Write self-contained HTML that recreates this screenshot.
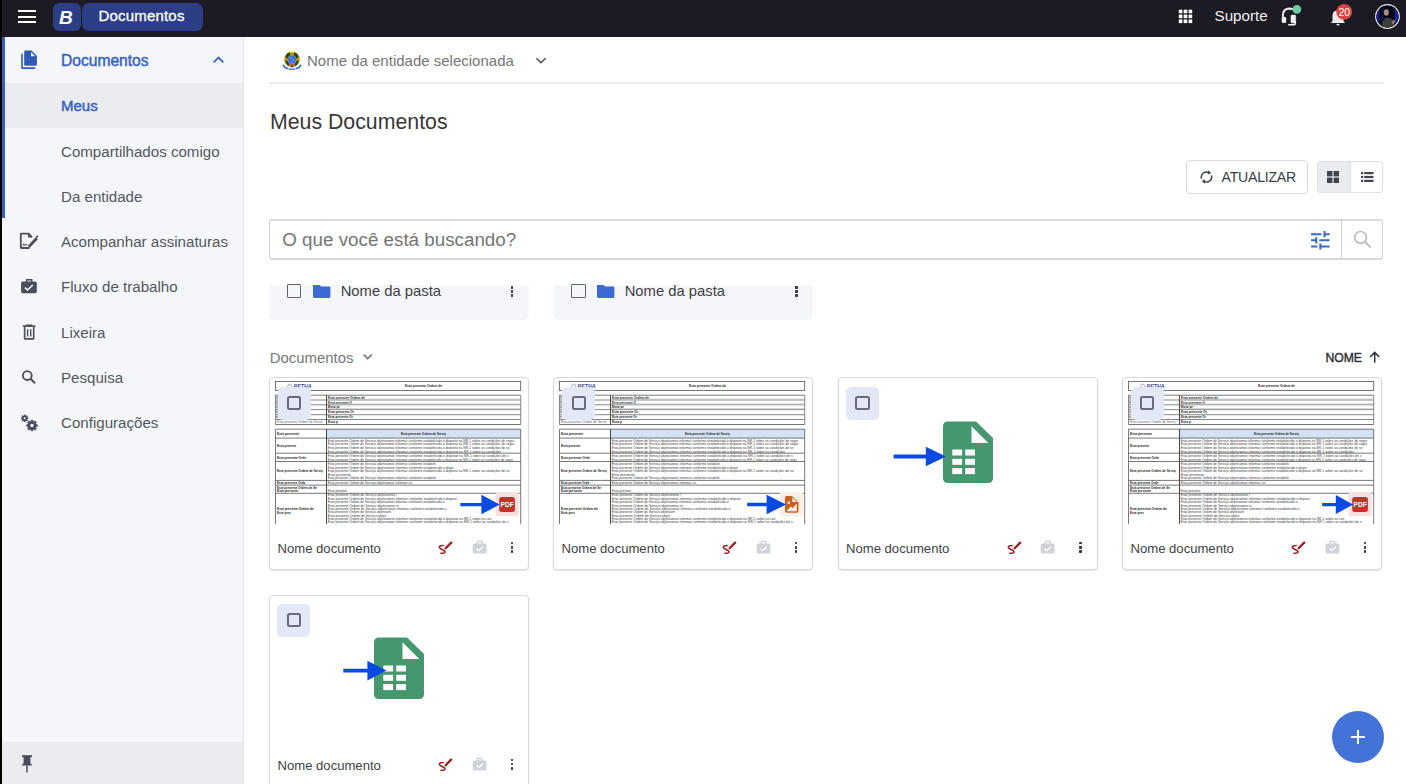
<!DOCTYPE html>
<html><head><meta charset="utf-8">
<style>
*{box-sizing:border-box;margin:0;padding:0}
html,body{width:1406px;height:784px;overflow:hidden;background:#fff;font-family:"Liberation Sans",sans-serif;}
.abs{position:absolute}
#top{position:absolute;left:0;top:0;width:1406px;height:37px;background:#1c1b24}
#side{position:absolute;left:0;top:37px;width:244px;height:747px;background:#f5f6fa;border-right:1px solid #e2e4e9}
#blackstrip{position:absolute;left:0;top:0;width:2px;height:784px;background:#000}
.nav{position:absolute;left:2px;width:241px;height:45px}
.nav .lbl{position:absolute;left:59px;top:0;line-height:45px;font-size:15px;color:#4d5059;white-space:nowrap}
.nav .ic{position:absolute;left:18px;top:13px;width:20px;height:20px}
.txt{position:absolute;white-space:nowrap;line-height:1}
.card{position:absolute;width:260px;border:1px solid #d6d9df;border-radius:4px;background:#fff;box-shadow:0 1px 1.5px rgba(0,0,0,0.1)}
.fcard{position:absolute;width:260px;background:#f5f6fa;border-radius:0 0 6px 6px}
.chk{position:absolute;width:14.2px;height:14.2px;border:2px solid #676c78;border-radius:2.5px}
.chkbg{position:absolute;width:33px;height:33px;background:#e3e8f6;border-radius:5px}
.kebab{position:absolute;width:3px}
.kebab i{display:block;width:3px;height:3px;border-radius:50%;background:#3c3f46;margin-bottom:1px}
.dot{position:absolute;left:0.3px;width:2.4px;height:2.5px;border-radius:0.7px;background:#33363d;display:block}
</style></head><body>
<div id="top">
  <!-- hamburger -->
  <div class="abs" style="left:18px;top:10px;width:18px;height:2px;background:#fff"></div>
  <div class="abs" style="left:18px;top:15.5px;width:18px;height:2px;background:#fff"></div>
  <div class="abs" style="left:18px;top:21px;width:18px;height:2px;background:#fff"></div>
  <div class="abs" style="left:53px;top:2.5px;width:28px;height:28.5px;background:#2c3e86;border-radius:6px"></div>
  <div class="txt" style="left:59px;top:8px;font-size:19px;font-weight:700;font-style:italic;color:#fff">B</div>
  <div class="abs" style="left:82px;top:2.5px;width:121px;height:28.5px;background:#2c3e86;border-radius:7px"></div>
  <div class="txt" style="left:98.4px;top:8.1px;font-size:15px;letter-spacing:0.2px;-webkit-text-stroke:0.3px #fff;color:#fff">Documentos</div>
</div>
<div id="side">
  <div class="abs" style="left:2px;top:0;width:3px;height:181px;background:#3b5fc0"></div>
  <div class="abs" style="left:5px;top:46px;width:238px;height:45px;background:#ebecef"></div>
  
  <div class="txt" style="left:61px;top:16px;font-size:15.6px;-webkit-text-stroke:0.45px #3762be;color:#3762be">Documentos</div>
  <svg class="abs" style="left:212px;top:18px" width="13" height="9" viewBox="0 0 13 9"><path d="M2.2 6.8 L6.5 2.6 L10.8 6.8" fill="none" stroke="#3762be" stroke-width="1.8" stroke-linecap="round"/></svg>
  <div class="txt" style="left:61px;top:61px;font-size:15px;-webkit-text-stroke:0.45px #3762be;color:#3762be">Meus</div>
  <div class="txt" style="left:61px;top:106.5px;font-size:15.1px;color:#53565e">Compartilhados comigo</div>
  <div class="txt" style="left:61px;top:151.5px;font-size:15.1px;color:#53565e">Da entidade</div>
  <div class="txt" style="left:61px;top:197.0px;font-size:15.1px;color:#53565e">Acompanhar assinaturas</div>
  <div class="txt" style="left:61px;top:242.0px;font-size:15.1px;color:#53565e">Fluxo de trabalho</div>
  <div class="txt" style="left:61px;top:287.5px;font-size:15.1px;color:#53565e">Lixeira</div>
  <div class="txt" style="left:61px;top:332.5px;font-size:15.1px;color:#53565e">Pesquisa</div>
  <div class="txt" style="left:61px;top:377.5px;font-size:15.1px;color:#53565e">Configurações</div>
  <div class="abs" style="left:2px;top:705px;width:241px;height:42px;background:#ebecef"></div>
</div>
<div id="blackstrip"></div>
<div id="sideicons">
  <svg class="abs" style="left:16px;top:46px" width="26" height="28" viewBox="0 0 26 28">
    <path d="M6 7.7 V21.4 Q6 22.1 6.7 22.1 H19.1" fill="none" stroke="#3059b8" stroke-width="1.6"/>
    <path d="M9.4 4.6 H15.5 L20.9 10 V18.6 Q20.9 19.8 19.7 19.8 H9.4 Q8.2 19.8 8.2 18.6 V5.8 Q8.2 4.6 9.4 4.6 Z" fill="#3059b8"/>
    <path d="M15 5.9 V10.2 H19.1 Z" fill="#f5f6fa"/>
  </svg>
  <svg class="abs" style="left:18px;top:231px" width="22" height="20" viewBox="0 0 22 20">
    <path d="M11.5 17 H3.4 Q2.8 17 2.8 16.3 V3.3 Q2.8 2.7 3.4 2.7 H10.6 L14 6.1" fill="none" stroke="#4a4e5a" stroke-width="1.8"/>
    <path d="M10 2.7 V6.6 H14 Z" fill="#4a4e5a"/>
    <path d="M10.8 15.8 L18.8 7.2" stroke="#4a4e5a" stroke-width="2.8"/>
    <path d="M17.6 6 L19.2 4.3 L20.4 5.6 L18.8 7.3 Z" fill="#4a4e5a"/>
    <path d="M4.6 15.2 L5.8 12.6 L6.8 14.6 L8 13 L9 14.8" fill="none" stroke="#4a4e5a" stroke-width="0.9"/>
  </svg>
  <svg class="abs" style="left:19px;top:277px" width="20" height="18" viewBox="0 0 20 18">
    <path d="M7.7 4.8 V2.8 H12.6 V4.8" fill="none" stroke="#4a4e5a" stroke-width="1.6"/>
    <rect x="2.1" y="4.6" width="15.7" height="11.6" rx="1.6" fill="#4a4e5a"/>
    <path d="M6 10.6 L8.6 13 L13.8 8" fill="none" stroke="#fff" stroke-width="1.5"/>
  </svg>
  <svg class="abs" style="left:20px;top:323px" width="18" height="18" viewBox="0 0 18 18">
    <path d="M2.9 3.1 H15.4" stroke="#4a4e5a" stroke-width="1.7"/>
    <path d="M6.6 2.6 V2.2 H11.6 V2.6" fill="none" stroke="#4a4e5a" stroke-width="1.4"/>
    <path d="M4.6 4 V15.2 Q4.6 15.9 5.3 15.9 H13 Q13.7 15.9 13.7 15.2 V4" fill="none" stroke="#4a4e5a" stroke-width="1.6"/>
    <path d="M7.6 6.2 V13.6 M10.7 6.2 V13.6" stroke="#4a4e5a" stroke-width="1.4"/>
  </svg>
  <svg class="abs" style="left:20px;top:368px" width="18" height="18" viewBox="0 0 18 18">
    <circle cx="7.3" cy="7.6" r="4.4" fill="none" stroke="#4a4e5a" stroke-width="1.8"/>
    <path d="M10.5 10.8 L15 15.3" stroke="#4a4e5a" stroke-width="2"/>
  </svg>
  <svg class="abs" style="left:19px;top:413px" width="20" height="20" viewBox="0 0 20 20">
    <g fill="#4a4e5a">
      <circle cx="5.7" cy="5.3" r="2.6"/>
      <g transform="translate(5.7,5.3)">
        <rect x="-0.8" y="-3.7" width="1.6" height="7.4"/><rect x="-3.7" y="-0.8" width="7.4" height="1.6"/>
        <rect x="-0.8" y="-3.7" width="1.6" height="7.4" transform="rotate(45)"/><rect x="-3.7" y="-0.8" width="7.4" height="1.6" transform="rotate(45)"/>
      </g>
      <circle cx="13" cy="12.5" r="4.2"/>
      <g transform="translate(13,12.5)">
        <rect x="-1.3" y="-5.6" width="2.6" height="11.2"/><rect x="-5.6" y="-1.3" width="11.2" height="2.6"/>
        <rect x="-1.3" y="-5.6" width="2.6" height="11.2" transform="rotate(45)"/><rect x="-5.6" y="-1.3" width="11.2" height="2.6" transform="rotate(45)"/>
      </g>
    </g>
    <circle cx="5.7" cy="5.3" r="1" fill="#f5f6fa"/>
    <circle cx="13" cy="12.5" r="1.7" fill="#f5f6fa"/>
  </svg>
  <svg class="abs" style="left:18px;top:754px" width="18" height="20" viewBox="0 0 18 20">
    <path d="M4 2.2 H14" stroke="#4a4e5a" stroke-width="2"/>
    <path d="M5.6 3 H12.4 V9 L14.4 11.6 H3.6 L5.6 9 Z" fill="#4a4e5a"/>
    <path d="M9 11.5 V18.6" stroke="#4a4e5a" stroke-width="1.5"/>
  </svg>
</div>


<!-- top bar right -->
<svg class="abs" style="left:1178px;top:9px" width="16" height="16" viewBox="0 0 16 16">
  <g fill="#fff">
    <rect x="0.8" y="0.7" width="3.6" height="3.6"/><rect x="5.7" y="0.7" width="3.6" height="3.6"/><rect x="10.6" y="0.7" width="3.6" height="3.6"/>
    <rect x="0.8" y="5.6" width="3.6" height="3.6"/><rect x="5.7" y="5.6" width="3.6" height="3.6"/><rect x="10.6" y="5.6" width="3.6" height="3.6"/>
    <rect x="0.8" y="10.5" width="3.6" height="3.6"/><rect x="5.7" y="10.5" width="3.6" height="3.6"/><rect x="10.6" y="10.5" width="3.6" height="3.6"/>
  </g>
</svg>
<div class="txt" style="left:1214.5px;top:8px;font-size:15.2px;color:#f0f0f0">Suporte</div>
<svg class="abs" style="left:1278px;top:3px" width="26" height="26" viewBox="0 0 26 26">
  <path d="M4.9 14.6 V12.5 Q4.9 5.8 11 5.5 Q13.5 5.5 15 6.3" fill="none" stroke="#f2f2f2" stroke-width="1.9"/>
  <rect x="3.7" y="14.1" width="4.5" height="5.8" rx="1.3" fill="#eeeeee"/>
  <rect x="13" y="12.1" width="4.6" height="7.9" rx="1" fill="#eeeeee" stroke="#f2f2f2" stroke-width="0.6"/>
  <path d="M10.2 21.7 H16.2 Q17.3 21.7 17.3 20.5 V18" fill="none" stroke="#f2f2f2" stroke-width="1.5"/>
  <circle cx="18.9" cy="6.4" r="4.3" fill="#6dcba4"/>
</svg>
<svg class="abs" style="left:1326px;top:2px" width="30" height="26" viewBox="0 0 30 26">
  <path d="M4.9 21 H19.1 L17.5 19 V14 Q17.5 8.6 12 8.3 Q6.5 8.6 6.5 14 V19 Z" fill="#ebebeb"/>
  <ellipse cx="12" cy="22.6" rx="1.6" ry="0.9" fill="#ebebeb"/>
  <circle cx="18.2" cy="9.9" r="7.9" fill="#da443d"/>
  <text x="18.3" y="13.8" font-family="Liberation Sans" font-size="10.6" fill="#fff" text-anchor="middle">20</text>
</svg>
<svg class="abs" style="left:1373px;top:2px" width="29" height="29" viewBox="0 0 29 29">
  <defs><clipPath id="av"><circle cx="14.5" cy="14.5" r="11"/></clipPath></defs>
  <circle cx="14.5" cy="14.5" r="12.4" fill="#e8e8ea"/>
  <circle cx="14.5" cy="14.5" r="11" fill="#05051a"/>
  <g clip-path="url(#av)">
    <rect x="2" y="2" width="25" height="25" fill="#05051a"/>
    <rect x="3" y="2" width="3.5" height="25" fill="#1a1f8c"/>
    <rect x="22" y="2" width="4" height="25" fill="#1c24a0"/>
    <rect x="9" y="2" width="1.5" height="25" fill="#10134e"/>
    <path d="M8.5 27 Q8.5 16.5 14 15.5 Q19.5 16 20.5 19 L22 27 Z" fill="#3a3d38"/>
    <ellipse cx="13.3" cy="10.4" rx="2.5" ry="3.2" fill="#a88e7e"/>
    <path d="M18.5 20.5 L21 17.5 L22.3 19 L20.5 23 Z" fill="#9c7a68"/>
  </g>
</svg>

<!-- entity header -->
<svg class="abs" style="left:282px;top:50px" width="20" height="22" viewBox="0 0 20 22">
  <circle cx="10" cy="9.6" r="7.7" fill="#c99a1c"/>
  <circle cx="10" cy="9.6" r="7.7" fill="none" stroke="#e8b52a" stroke-width="1" stroke-dasharray="1.5 1.2"/>
  <path d="M3.4 7 Q4 3.4 7.6 2.6 L8.6 5 Q5.8 6 5.6 9 Z M16.6 7 Q16 3.4 12.4 2.6 L11.4 5 Q14.2 6 14.4 9 Z M3.2 10.5 Q3.6 14.5 7 16 L7.6 13.6 Q5.4 12.6 5.4 10.5 Z M16.8 10.5 Q16.4 14.5 13 16 L12.4 13.6 Q14.6 12.6 14.6 10.5 Z" fill="#1f4a1a"/>
  <circle cx="10" cy="9.4" r="3.9" fill="#3f6fe8"/>
  <circle cx="9" cy="8.6" r="0.6" fill="#9fbef8"/><circle cx="11" cy="10.2" r="0.6" fill="#9fbef8"/>
  <path d="M1 14.8 L3 17.6 L6 18.6 M19 14.8 L17 17.6 L14 18.6" fill="none" stroke="#3c6ee0" stroke-width="1.8"/>
  <path d="M6.5 18.8 Q10 19.8 13.5 18.8" fill="none" stroke="#4a7ae6" stroke-width="1.4"/>
  <rect x="8.6" y="14.4" width="2.8" height="2.6" fill="#7a3b6a"/>
</svg>
<div class="txt" style="left:307px;top:52.9px;font-size:15px;color:#767676">Nome da entidade selecionada</div>
<svg class="abs" style="left:534px;top:55px" width="14" height="10" viewBox="0 0 14 10"><path d="M2.3 3.2 L7 7.6 L11.7 3.2" fill="none" stroke="#555" stroke-width="1.5"/></svg>
<div class="abs" style="left:269px;top:82px;width:1114.5px;height:2px;background:#ebedf0"></div>

<div class="txt" style="left:270px;top:112.3px;font-size:21.3px;color:#383838">Meus Documentos</div>

<!-- toolbar -->
<div class="abs" style="left:1186.3px;top:160.2px;width:121.4px;height:34px;border:1px solid #d6d9de;border-radius:4px;background:#fff"></div>
<svg class="abs" style="left:1198px;top:168px" width="17" height="18" viewBox="0 0 17 18">
  <path d="M3.4 10.6 Q2.8 6.3 6 4.6 Q8.6 3.4 11 4.6" fill="none" stroke="#464a52" stroke-width="1.6"/>
  <path d="M10.2 2.2 L13.4 4.9 L9.8 6.8 Z" fill="#464a52"/>
  <path d="M13.6 7.4 Q14.2 11.7 11 13.4 Q8.4 14.6 6 13.4" fill="none" stroke="#464a52" stroke-width="1.6"/>
  <path d="M6.8 15.8 L3.6 13.1 L7.2 11.2 Z" fill="#464a52"/>
</svg>
<div class="txt" style="left:1221.5px;top:170.3px;font-size:14.1px;letter-spacing:-0.22px;color:#3a3d44">ATUALIZAR</div>
<div class="abs" style="left:1317px;top:161.3px;width:66.4px;height:32.2px;border:1px solid #dcdfe4;border-radius:3px;background:#fff;overflow:hidden">
  <div class="abs" style="left:0;top:0;width:33px;height:31px;background:#ebecef;border-right:1px solid #dcdfe4"></div>
</div>
<svg class="abs" style="left:1326px;top:170px" width="14" height="14" viewBox="0 0 14 14">
  <rect x="1" y="1" width="5.4" height="5.4" fill="#41454e"/><rect x="7.6" y="1" width="5.4" height="5.4" fill="#41454e"/>
  <rect x="1" y="7.6" width="5.4" height="5.4" fill="#41454e"/><rect x="7.6" y="7.6" width="5.4" height="5.4" fill="#41454e"/>
</svg>
<svg class="abs" style="left:1360px;top:170px" width="15" height="14" viewBox="0 0 15 14">
  <rect x="1" y="2" width="2.2" height="2.2" fill="#41454e"/><rect x="4.2" y="2" width="9.3" height="2.2" fill="#41454e"/>
  <rect x="1" y="5.9" width="2.2" height="2.2" fill="#41454e"/><rect x="4.2" y="5.9" width="9.3" height="2.2" fill="#41454e"/>
  <rect x="1" y="9.8" width="2.2" height="2.2" fill="#41454e"/><rect x="4.2" y="9.8" width="9.3" height="2.2" fill="#41454e"/>
</svg>

<!-- search -->
<div class="abs" style="left:269.3px;top:219.4px;width:1114.2px;height:41px;border:1px solid #d4d4d4;border-top:2px solid #dadada;border-bottom:2px solid #d8d8d8;border-radius:3px;background:#fff"></div>
<div class="abs" style="left:1341px;top:221px;width:1.4px;height:38px;background:#d2d2d2"></div>
<div class="txt" style="left:282.3px;top:230.8px;font-size:18.8px;color:#757575">O que você está buscando?</div>
<svg class="abs" style="left:1308.4px;top:227.7px" width="24.7" height="24.7" viewBox="0 0 24 24"><path fill="#3b6cc4" d="M3 17v2h6v-2H3zM3 5v2h10V5H3zm10 16v-2h8v-2h-8v-2h-2v6h2zM7 9v2H3v2h4v2h2V9H7zm14 4v-2H11v2h10zm-6-4h2V7h4V5h-4V3h-2v6z"/></svg>
<svg class="abs" style="left:1350px;top:228px" width="24" height="24" viewBox="0 0 24 24">
  <circle cx="10.5" cy="9.4" r="5.9" fill="none" stroke="#bcbcbc" stroke-width="1.7"/>
  <path d="M14.8 13.7 L20.6 19.6" stroke="#bcbcbc" stroke-width="1.9"/>
</svg>

<!-- folders (clipped) -->
<div class="abs" style="left:269.4px;top:285px;width:260px;height:35px;background:#f5f6fa;border-radius:0 0 6px 6px"></div>
<div class="abs" style="left:553.5px;top:285px;width:259.5px;height:35px;background:#f5f6fa;border-radius:0 0 6px 6px"></div>
<div class="abs" style="left:269px;top:262px;width:1120px;height:23px;background:#fff"></div>
<div class="abs" style="left:286.8px;top:284.3px;width:14.5px;height:13.8px;border:1px solid #5e636e;border-radius:1px"></div>
<div class="abs" style="left:571px;top:284.3px;width:14.5px;height:13.8px;border:1px solid #5e636e;border-radius:1px"></div>
<svg class="abs" style="left:312px;top:283px" width="20" height="16" viewBox="0 0 20 16">
  <path d="M1 2 H7.4 L9.2 3.6 H17 Q18.4 3.6 18.4 5 V13.4 Q18.4 14.9 17 14.9 H2.4 Q1 14.9 1 13.4 Z" fill="#3d6bd6"/>
</svg>
<svg class="abs" style="left:596px;top:283px" width="20" height="16" viewBox="0 0 20 16">
  <path d="M1 2 H7.4 L9.2 3.6 H17 Q18.4 3.6 18.4 5 V13.4 Q18.4 14.9 17 14.9 H2.4 Q1 14.9 1 13.4 Z" fill="#3d6bd6"/>
</svg>
<div class="txt" style="left:340.7px;top:284px;font-size:14.8px;color:#3d3f45">Nome da pasta</div>
<div class="txt" style="left:624.7px;top:284px;font-size:14.8px;color:#3d3f45">Nome da pasta</div>
<div class="abs" style="left:510.5px;top:285.5px;width:3px;height:12px"><i class="dot" style="top:0.5px"></i><i class="dot" style="top:4.5px"></i><i class="dot" style="top:8.5px"></i></div>
<div class="abs" style="left:795.2px;top:285.5px;width:3px;height:12px"><i class="dot" style="top:0.5px"></i><i class="dot" style="top:4.5px"></i><i class="dot" style="top:8.5px"></i></div>

<!-- section header -->
<div class="txt" style="left:269.8px;top:350.8px;font-size:14.9px;color:#777">Documentos</div>
<svg class="abs" style="left:361px;top:351px" width="13" height="10" viewBox="0 0 13 10"><path d="M2.6 3.6 L6.7 7.8 L10.8 3.6" fill="none" stroke="#666" stroke-width="1.4"/></svg>
<div class="txt" style="left:1325.5px;top:351.8px;font-size:12.2px;letter-spacing:-0.05px;-webkit-text-stroke:0.4px #2f3138;color:#2f3138">NOME</div>
<svg class="abs" style="left:1367px;top:350px" width="15" height="15" viewBox="0 0 15 15"><path d="M7.7 12.7 V2.6 M3.2 7 L7.7 2.4 L12.2 7" fill="none" stroke="#2f3138" stroke-width="1.5"/></svg>

<div class="card" style="left:269px;top:377px;height:193px"></div>
<div class="abs" style="left:275px;top:381.2px;width:250px;height:143px;overflow:hidden"><svg width="250" height="143" viewBox="0 0 250 143" style="position:absolute;left:0;top:0"><rect x="0.5" y="0.4" width="245.2" height="9" fill="none" stroke="#555" stroke-width="0.8"/><text x="18.5" y="7.2" font-family="Liberation Sans" font-size="5.2" font-weight="700" font-style="italic" fill="#3b4890" textLength="18" lengthAdjust="spacingAndGlyphs">BETHA</text><path d="M12.5 6.5 Q12.5 3 15 3 Q17 3.2 16.3 5.5 L16 6.8 Z" fill="none" stroke="#6b74a8" stroke-width="0.6"/><text x="130" y="6.30" font-family="Liberation Sans" font-size="3.4" font-weight='700' fill="#222" textLength="37" lengthAdjust="spacingAndGlyphs">Esta presente Ordem de </text><path d="M0.5 14.2 H245.7" stroke="#555" stroke-width="0.8"/><path d="M0.5 19 H245.7" stroke="#555" stroke-width="0.7"/><path d="M0.5 23.8 H245.7" stroke="#555" stroke-width="0.7"/><path d="M0.5 28.6 H245.7" stroke="#555" stroke-width="0.7"/><path d="M0.5 33.7 H245.7" stroke="#555" stroke-width="0.7"/><path d="M0.5 38.5 H245.7" stroke="#555" stroke-width="0.7"/><path d="M0.5 43.5 H245.7" stroke="#555" stroke-width="0.8"/><path d="M0.5 14.2 V43.5" stroke="#555" stroke-width="0.7"/><path d="M245.7 14.2 V43.5" stroke="#555" stroke-width="0.7"/><path d="M51.5 14.2 V43.5" stroke="#333" stroke-width="0.9"/><text x="53" y="17.70" font-family="Liberation Sans" font-size="3.2" font-weight='700' fill="#222" textLength="37" lengthAdjust="spacingAndGlyphs">Esta presente Ordem de </text><rect x="1" y="15.2" width="2" height="2.6" fill="#aaa"/><text x="53" y="22.50" font-family="Liberation Sans" font-size="3.2" font-weight='700' fill="#222" textLength="24" lengthAdjust="spacingAndGlyphs">Esta presente O</text><rect x="1" y="20" width="2" height="2.6" fill="#aaa"/><text x="53" y="27.30" font-family="Liberation Sans" font-size="3.2" font-weight='700' fill="#222" textLength="12" lengthAdjust="spacingAndGlyphs">Esta pr</text><rect x="1" y="24.8" width="2" height="2.6" fill="#aaa"/><text x="53" y="32.25" font-family="Liberation Sans" font-size="3.2" font-weight='700' fill="#222" textLength="26" lengthAdjust="spacingAndGlyphs">Esta presente Or</text><rect x="1" y="29.6" width="2" height="2.6" fill="#aaa"/><text x="53" y="37.20" font-family="Liberation Sans" font-size="3.2" font-weight='700' fill="#222" textLength="25" lengthAdjust="spacingAndGlyphs">Esta presente Or</text><rect x="1" y="34.7" width="2" height="2.6" fill="#aaa"/><text x="53" y="42.10" font-family="Liberation Sans" font-size="3.2" font-weight='700' fill="#222" textLength="10" lengthAdjust="spacingAndGlyphs">Esta p</text><text x="2" y="42.10" font-family="Liberation Sans" font-size="3.0"  fill="#666" textLength="46" lengthAdjust="spacingAndGlyphs">Esta presente Ordem de Serviç</text><rect x="51.8" y="17.8" width="193.6" height="0.9" fill="#bbb"/><rect x="51.8" y="22.6" width="193.6" height="0.9" fill="#bbb"/><rect x="51.8" y="27.400000000000002" width="193.6" height="0.9" fill="#bbb"/><rect x="51.5" y="48.2" width="194.2" height="8.899999999999999" fill="#d3e2f4"/><path d="M0.5 48.2 H245.7" stroke="#555" stroke-width="0.8"/><path d="M0.5 57.1 H245.7" stroke="#555" stroke-width="0.8"/><path d="M0.5 72.2 H245.7" stroke="#555" stroke-width="0.8"/><path d="M0.5 80.5 H245.7" stroke="#555" stroke-width="0.8"/><path d="M0.5 99.4 H245.7" stroke="#555" stroke-width="0.8"/><path d="M0.5 104.1 H245.7" stroke="#555" stroke-width="0.8"/><path d="M0.5 112.3 H245.7" stroke="#555" stroke-width="0.8"/><path d="M0.5 48.2 V146" stroke="#555" stroke-width="0.8"/><path d="M245.7 48.2 V146" stroke="#555" stroke-width="0.8"/><path d="M51.5 48.2 V146" stroke="#333" stroke-width="0.9"/><text x="126" y="53.80" font-family="Liberation Sans" font-size="3.2" font-weight='700' fill="#222" textLength="45" lengthAdjust="spacingAndGlyphs">Esta presente Ordem de Serviç</text><text x="2" y="53.90" font-family="Liberation Sans" font-size="3.1" font-weight='700' fill="#222" textLength="22" lengthAdjust="spacingAndGlyphs">Esta presente </text><text x="2" y="66.10" font-family="Liberation Sans" font-size="3.1" font-weight='700' fill="#222" textLength="19" lengthAdjust="spacingAndGlyphs">Esta present</text><text x="2" y="77.70" font-family="Liberation Sans" font-size="3.1" font-weight='700' fill="#222" textLength="29" lengthAdjust="spacingAndGlyphs">Esta presente Orde</text><text x="2" y="91.10" font-family="Liberation Sans" font-size="3.1" font-weight='700' fill="#222" textLength="46" lengthAdjust="spacingAndGlyphs">Esta presente Ordem de Serviç</text><text x="2" y="102.80" font-family="Liberation Sans" font-size="3.1" font-weight='700' fill="#222" textLength="28.5" lengthAdjust="spacingAndGlyphs">Esta presente Orde</text><text x="2" y="107.90" font-family="Liberation Sans" font-size="3.1" font-weight='700' fill="#222" textLength="40" lengthAdjust="spacingAndGlyphs">Esta presente Ordem de Se</text><text x="2" y="110.80" font-family="Liberation Sans" font-size="3.1" font-weight='700' fill="#222" textLength="21" lengthAdjust="spacingAndGlyphs">Esta presente</text><text x="2" y="129.10" font-family="Liberation Sans" font-size="3.1" font-weight='700' fill="#222" textLength="36.8" lengthAdjust="spacingAndGlyphs">Esta presente Ordem de </text><text x="2" y="132.80" font-family="Liberation Sans" font-size="3.1" font-weight='700' fill="#222" textLength="14" lengthAdjust="spacingAndGlyphs">Esta pres</text><text x="52.8" y="61.10" font-family="Liberation Sans" font-size="3.1"  fill="#3a3a3a" textLength="186.5" lengthAdjust="spacingAndGlyphs">Esta presente Ordem de Serviço objetivamos informar conforme estabelecido o disposto na NR-1 sobre as condições de segur</text><text x="52.8" y="64.40" font-family="Liberation Sans" font-size="3.1"  fill="#3a3a3a" textLength="186.5" lengthAdjust="spacingAndGlyphs">Esta presente Ordem de Serviço objetivamos informar conforme estabelecido o disposto na NR-1 sobre as condições de segur</text><text x="52.8" y="67.70" font-family="Liberation Sans" font-size="3.1"  fill="#3a3a3a" textLength="181.7" lengthAdjust="spacingAndGlyphs">Esta presente Ordem de Serviço objetivamos informar conforme estabelecido o disposto na NR-1 sobre as condições de se</text><text x="52.8" y="71.60" font-family="Liberation Sans" font-size="3.1"  fill="#3a3a3a" textLength="173.2" lengthAdjust="spacingAndGlyphs">Esta presente Ordem de Serviço objetivamos informar conforme estabelecido o disposto na NR-1 sobre as condições</text><text x="52.8" y="76.40" font-family="Liberation Sans" font-size="3.1"  fill="#3a3a3a" textLength="180.8" lengthAdjust="spacingAndGlyphs">Esta presente Ordem de Serviço objetivamos informar conforme estabelecido o disposto na NR-1 sobre as condições de s</text><text x="52.8" y="79.90" font-family="Liberation Sans" font-size="3.1"  fill="#3a3a3a" textLength="185" lengthAdjust="spacingAndGlyphs">Esta presente Ordem de Serviço objetivamos informar conforme estabelecido o disposto na NR-1 sobre as condições de segu</text><text x="52.8" y="84.20" font-family="Liberation Sans" font-size="3.1"  fill="#3a3a3a" textLength="108" lengthAdjust="spacingAndGlyphs">Esta presente Ordem de Serviço objetivamos informar conforme estabele</text><text x="52.8" y="87.80" font-family="Liberation Sans" font-size="3.1"  fill="#3a3a3a" textLength="126" lengthAdjust="spacingAndGlyphs">Esta presente Ordem de Serviço objetivamos informar conforme estabelecido o dispo</text><text x="52.8" y="91.10" font-family="Liberation Sans" font-size="3.1"  fill="#3a3a3a" textLength="181.7" lengthAdjust="spacingAndGlyphs">Esta presente Ordem de Serviço objetivamos informar conforme estabelecido o disposto na NR-1 sobre as condições de se</text><text x="52.8" y="94.70" font-family="Liberation Sans" font-size="3.1"  fill="#3a3a3a" textLength="23" lengthAdjust="spacingAndGlyphs">Esta presente </text><text x="52.8" y="98.00" font-family="Liberation Sans" font-size="3.1"  fill="#3a3a3a" textLength="108" lengthAdjust="spacingAndGlyphs">Esta presente Ordem de Serviço objetivamos informar conforme estabele</text><text x="52.8" y="102.90" font-family="Liberation Sans" font-size="3.1"  fill="#3a3a3a" textLength="84.2" lengthAdjust="spacingAndGlyphs">Esta presente Ordem de Serviço objetivamos informar co</text><text x="52.8" y="110.80" font-family="Liberation Sans" font-size="3.1"  fill="#3a3a3a" textLength="19.1" lengthAdjust="spacingAndGlyphs">Esta present</text><text x="52.8" y="115.40" font-family="Liberation Sans" font-size="3.1"  fill="#3a3a3a" textLength="68.9" lengthAdjust="spacingAndGlyphs">Esta presente Ordem de Serviço objetivamos i</text><text x="52.8" y="118.90" font-family="Liberation Sans" font-size="3.1"  fill="#3a3a3a" textLength="128.8" lengthAdjust="spacingAndGlyphs">Esta presente Ordem de Serviço objetivamos informar conforme estabelecido o dispost</text><text x="52.8" y="121.90" font-family="Liberation Sans" font-size="3.1"  fill="#3a3a3a" textLength="116.7" lengthAdjust="spacingAndGlyphs">Esta presente Ordem de Serviço objetivamos informar conforme estabelecido o</text><text x="52.8" y="125.50" font-family="Liberation Sans" font-size="3.1"  fill="#3a3a3a" textLength="70.8" lengthAdjust="spacingAndGlyphs">Esta presente Ordem de Serviço objetivamos in</text><text x="52.8" y="128.90" font-family="Liberation Sans" font-size="3.1"  fill="#3a3a3a" textLength="118.6" lengthAdjust="spacingAndGlyphs">Esta presente Ordem de Serviço objetivamos informar conforme estabelecido o </text><text x="52.8" y="132.20" font-family="Liberation Sans" font-size="3.1"  fill="#3a3a3a" textLength="63.1" lengthAdjust="spacingAndGlyphs">Esta presente Ordem de Serviço objetivam</text><text x="52.8" y="135.70" font-family="Liberation Sans" font-size="3.1"  fill="#3a3a3a" textLength="58.4" lengthAdjust="spacingAndGlyphs">Esta presente Ordem de Serviço objeti</text><text x="52.8" y="139.00" font-family="Liberation Sans" font-size="3.1"  fill="#3a3a3a" textLength="163.6" lengthAdjust="spacingAndGlyphs">Esta presente Ordem de Serviço objetivamos informar conforme estabelecido o disposto na NR-1 sobre as con</text><text x="52.8" y="142.30" font-family="Liberation Sans" font-size="3.1"  fill="#3a3a3a" textLength="180.8" lengthAdjust="spacingAndGlyphs">Esta presente Ordem de Serviço objetivamos informar conforme estabelecido o disposto na NR-1 sobre as condições de s</text></svg><svg width="250" height="143" style="position:absolute;left:0;top:0"><rect x="220.5" y="111.5" width="23.3" height="23.6" rx="2" fill="#f8e0e0"/><rect x="224.2" y="116" width="15.7" height="15" rx="2.5" fill="#c9302c"/><text x="232.1" y="126.4" font-family="Liberation Sans" font-weight="700" font-size="6.6" fill="#fff" text-anchor="middle">PDF</text><path d="M185.4 121.89999999999999 H206.4 V113.85 L224.6 123.6 L206.4 133.35 V125.3 H185.4 Z" fill="#0a4ae0"/></svg></div>
<div class="chkbg" style="left:278px;top:386.8px"></div><div class="chk" style="left:287.3px;top:396.0px"></div>
<div class="txt" style="left:277.5px;top:541.71px;font-size:13.1px;color:#3d3f45;">Nome documento</div>
<svg class="abs" style="left:434.0px;top:536.0px" width="20" height="20" viewBox="0 0 20 20"><path d="M9.2 9.5 Q5.6 9.6 5.3 11 Q5.2 12.4 9.6 14.2 Q11.6 15.3 10.8 16.5 Q10 17.5 6.9 17.3" fill="none" stroke="#a01e22" stroke-width="1.55" stroke-linecap="round"/><path d="M11.6 12.2 L17.2 6.6" stroke="#a01e22" stroke-width="2.3" stroke-linecap="round"/></svg><svg class="abs" style="left:471.5px;top:540.3px" width="16" height="14" viewBox="0 0 16 14"><path d="M5.4 4 V1.4 H9.8 V4" fill="none" stroke="#cfd2d8" stroke-width="1.4"/><rect x="0.7" y="3.5" width="13.7" height="10.1" rx="1.5" fill="#cfd2d8"/><path d="M4.6 8.6 L6.8 10.7 L10.8 6.7" fill="none" stroke="#fff" stroke-width="1.3"/></svg><div class="abs" style="left:510.7px;top:541.8px;width:3px;height:12px"><i class="dot" style="top:0"></i><i class="dot" style="top:4.3px"></i><i class="dot" style="top:8.6px"></i></div>
<div class="card" style="left:553px;top:377px;height:193px"></div>
<div class="abs" style="left:559px;top:381.2px;width:250px;height:143px;overflow:hidden"><svg width="250" height="143" viewBox="0 0 250 143" style="position:absolute;left:0;top:0"><rect x="0.5" y="0.4" width="245.2" height="9" fill="none" stroke="#555" stroke-width="0.8"/><text x="18.5" y="7.2" font-family="Liberation Sans" font-size="5.2" font-weight="700" font-style="italic" fill="#3b4890" textLength="18" lengthAdjust="spacingAndGlyphs">BETHA</text><path d="M12.5 6.5 Q12.5 3 15 3 Q17 3.2 16.3 5.5 L16 6.8 Z" fill="none" stroke="#6b74a8" stroke-width="0.6"/><text x="130" y="6.30" font-family="Liberation Sans" font-size="3.4" font-weight='700' fill="#222" textLength="37" lengthAdjust="spacingAndGlyphs">Esta presente Ordem de </text><path d="M0.5 14.2 H245.7" stroke="#555" stroke-width="0.8"/><path d="M0.5 19 H245.7" stroke="#555" stroke-width="0.7"/><path d="M0.5 23.8 H245.7" stroke="#555" stroke-width="0.7"/><path d="M0.5 28.6 H245.7" stroke="#555" stroke-width="0.7"/><path d="M0.5 33.7 H245.7" stroke="#555" stroke-width="0.7"/><path d="M0.5 38.5 H245.7" stroke="#555" stroke-width="0.7"/><path d="M0.5 43.5 H245.7" stroke="#555" stroke-width="0.8"/><path d="M0.5 14.2 V43.5" stroke="#555" stroke-width="0.7"/><path d="M245.7 14.2 V43.5" stroke="#555" stroke-width="0.7"/><path d="M51.5 14.2 V43.5" stroke="#333" stroke-width="0.9"/><text x="53" y="17.70" font-family="Liberation Sans" font-size="3.2" font-weight='700' fill="#222" textLength="37" lengthAdjust="spacingAndGlyphs">Esta presente Ordem de </text><rect x="1" y="15.2" width="2" height="2.6" fill="#aaa"/><text x="53" y="22.50" font-family="Liberation Sans" font-size="3.2" font-weight='700' fill="#222" textLength="24" lengthAdjust="spacingAndGlyphs">Esta presente O</text><rect x="1" y="20" width="2" height="2.6" fill="#aaa"/><text x="53" y="27.30" font-family="Liberation Sans" font-size="3.2" font-weight='700' fill="#222" textLength="12" lengthAdjust="spacingAndGlyphs">Esta pr</text><rect x="1" y="24.8" width="2" height="2.6" fill="#aaa"/><text x="53" y="32.25" font-family="Liberation Sans" font-size="3.2" font-weight='700' fill="#222" textLength="26" lengthAdjust="spacingAndGlyphs">Esta presente Or</text><rect x="1" y="29.6" width="2" height="2.6" fill="#aaa"/><text x="53" y="37.20" font-family="Liberation Sans" font-size="3.2" font-weight='700' fill="#222" textLength="25" lengthAdjust="spacingAndGlyphs">Esta presente Or</text><rect x="1" y="34.7" width="2" height="2.6" fill="#aaa"/><text x="53" y="42.10" font-family="Liberation Sans" font-size="3.2" font-weight='700' fill="#222" textLength="10" lengthAdjust="spacingAndGlyphs">Esta p</text><text x="2" y="42.10" font-family="Liberation Sans" font-size="3.0"  fill="#666" textLength="46" lengthAdjust="spacingAndGlyphs">Esta presente Ordem de Serviç</text><rect x="51.8" y="17.8" width="193.6" height="0.9" fill="#bbb"/><rect x="51.8" y="22.6" width="193.6" height="0.9" fill="#bbb"/><rect x="51.8" y="27.400000000000002" width="193.6" height="0.9" fill="#bbb"/><rect x="51.5" y="48.2" width="194.2" height="8.899999999999999" fill="#d3e2f4"/><path d="M0.5 48.2 H245.7" stroke="#555" stroke-width="0.8"/><path d="M0.5 57.1 H245.7" stroke="#555" stroke-width="0.8"/><path d="M0.5 72.2 H245.7" stroke="#555" stroke-width="0.8"/><path d="M0.5 80.5 H245.7" stroke="#555" stroke-width="0.8"/><path d="M0.5 99.4 H245.7" stroke="#555" stroke-width="0.8"/><path d="M0.5 104.1 H245.7" stroke="#555" stroke-width="0.8"/><path d="M0.5 112.3 H245.7" stroke="#555" stroke-width="0.8"/><path d="M0.5 48.2 V146" stroke="#555" stroke-width="0.8"/><path d="M245.7 48.2 V146" stroke="#555" stroke-width="0.8"/><path d="M51.5 48.2 V146" stroke="#333" stroke-width="0.9"/><text x="126" y="53.80" font-family="Liberation Sans" font-size="3.2" font-weight='700' fill="#222" textLength="45" lengthAdjust="spacingAndGlyphs">Esta presente Ordem de Serviç</text><text x="2" y="53.90" font-family="Liberation Sans" font-size="3.1" font-weight='700' fill="#222" textLength="22" lengthAdjust="spacingAndGlyphs">Esta presente </text><text x="2" y="66.10" font-family="Liberation Sans" font-size="3.1" font-weight='700' fill="#222" textLength="19" lengthAdjust="spacingAndGlyphs">Esta present</text><text x="2" y="77.70" font-family="Liberation Sans" font-size="3.1" font-weight='700' fill="#222" textLength="29" lengthAdjust="spacingAndGlyphs">Esta presente Orde</text><text x="2" y="91.10" font-family="Liberation Sans" font-size="3.1" font-weight='700' fill="#222" textLength="46" lengthAdjust="spacingAndGlyphs">Esta presente Ordem de Serviç</text><text x="2" y="102.80" font-family="Liberation Sans" font-size="3.1" font-weight='700' fill="#222" textLength="28.5" lengthAdjust="spacingAndGlyphs">Esta presente Orde</text><text x="2" y="107.90" font-family="Liberation Sans" font-size="3.1" font-weight='700' fill="#222" textLength="40" lengthAdjust="spacingAndGlyphs">Esta presente Ordem de Se</text><text x="2" y="110.80" font-family="Liberation Sans" font-size="3.1" font-weight='700' fill="#222" textLength="21" lengthAdjust="spacingAndGlyphs">Esta presente</text><text x="2" y="129.10" font-family="Liberation Sans" font-size="3.1" font-weight='700' fill="#222" textLength="36.8" lengthAdjust="spacingAndGlyphs">Esta presente Ordem de </text><text x="2" y="132.80" font-family="Liberation Sans" font-size="3.1" font-weight='700' fill="#222" textLength="14" lengthAdjust="spacingAndGlyphs">Esta pres</text><text x="52.8" y="61.10" font-family="Liberation Sans" font-size="3.1"  fill="#3a3a3a" textLength="186.5" lengthAdjust="spacingAndGlyphs">Esta presente Ordem de Serviço objetivamos informar conforme estabelecido o disposto na NR-1 sobre as condições de segur</text><text x="52.8" y="64.40" font-family="Liberation Sans" font-size="3.1"  fill="#3a3a3a" textLength="186.5" lengthAdjust="spacingAndGlyphs">Esta presente Ordem de Serviço objetivamos informar conforme estabelecido o disposto na NR-1 sobre as condições de segur</text><text x="52.8" y="67.70" font-family="Liberation Sans" font-size="3.1"  fill="#3a3a3a" textLength="181.7" lengthAdjust="spacingAndGlyphs">Esta presente Ordem de Serviço objetivamos informar conforme estabelecido o disposto na NR-1 sobre as condições de se</text><text x="52.8" y="71.60" font-family="Liberation Sans" font-size="3.1"  fill="#3a3a3a" textLength="173.2" lengthAdjust="spacingAndGlyphs">Esta presente Ordem de Serviço objetivamos informar conforme estabelecido o disposto na NR-1 sobre as condições</text><text x="52.8" y="76.40" font-family="Liberation Sans" font-size="3.1"  fill="#3a3a3a" textLength="180.8" lengthAdjust="spacingAndGlyphs">Esta presente Ordem de Serviço objetivamos informar conforme estabelecido o disposto na NR-1 sobre as condições de s</text><text x="52.8" y="79.90" font-family="Liberation Sans" font-size="3.1"  fill="#3a3a3a" textLength="185" lengthAdjust="spacingAndGlyphs">Esta presente Ordem de Serviço objetivamos informar conforme estabelecido o disposto na NR-1 sobre as condições de segu</text><text x="52.8" y="84.20" font-family="Liberation Sans" font-size="3.1"  fill="#3a3a3a" textLength="108" lengthAdjust="spacingAndGlyphs">Esta presente Ordem de Serviço objetivamos informar conforme estabele</text><text x="52.8" y="87.80" font-family="Liberation Sans" font-size="3.1"  fill="#3a3a3a" textLength="126" lengthAdjust="spacingAndGlyphs">Esta presente Ordem de Serviço objetivamos informar conforme estabelecido o dispo</text><text x="52.8" y="91.10" font-family="Liberation Sans" font-size="3.1"  fill="#3a3a3a" textLength="181.7" lengthAdjust="spacingAndGlyphs">Esta presente Ordem de Serviço objetivamos informar conforme estabelecido o disposto na NR-1 sobre as condições de se</text><text x="52.8" y="94.70" font-family="Liberation Sans" font-size="3.1"  fill="#3a3a3a" textLength="23" lengthAdjust="spacingAndGlyphs">Esta presente </text><text x="52.8" y="98.00" font-family="Liberation Sans" font-size="3.1"  fill="#3a3a3a" textLength="108" lengthAdjust="spacingAndGlyphs">Esta presente Ordem de Serviço objetivamos informar conforme estabele</text><text x="52.8" y="102.90" font-family="Liberation Sans" font-size="3.1"  fill="#3a3a3a" textLength="84.2" lengthAdjust="spacingAndGlyphs">Esta presente Ordem de Serviço objetivamos informar co</text><text x="52.8" y="110.80" font-family="Liberation Sans" font-size="3.1"  fill="#3a3a3a" textLength="19.1" lengthAdjust="spacingAndGlyphs">Esta present</text><text x="52.8" y="115.40" font-family="Liberation Sans" font-size="3.1"  fill="#3a3a3a" textLength="68.9" lengthAdjust="spacingAndGlyphs">Esta presente Ordem de Serviço objetivamos i</text><text x="52.8" y="118.90" font-family="Liberation Sans" font-size="3.1"  fill="#3a3a3a" textLength="128.8" lengthAdjust="spacingAndGlyphs">Esta presente Ordem de Serviço objetivamos informar conforme estabelecido o dispost</text><text x="52.8" y="121.90" font-family="Liberation Sans" font-size="3.1"  fill="#3a3a3a" textLength="116.7" lengthAdjust="spacingAndGlyphs">Esta presente Ordem de Serviço objetivamos informar conforme estabelecido o</text><text x="52.8" y="125.50" font-family="Liberation Sans" font-size="3.1"  fill="#3a3a3a" textLength="70.8" lengthAdjust="spacingAndGlyphs">Esta presente Ordem de Serviço objetivamos in</text><text x="52.8" y="128.90" font-family="Liberation Sans" font-size="3.1"  fill="#3a3a3a" textLength="118.6" lengthAdjust="spacingAndGlyphs">Esta presente Ordem de Serviço objetivamos informar conforme estabelecido o </text><text x="52.8" y="132.20" font-family="Liberation Sans" font-size="3.1"  fill="#3a3a3a" textLength="63.1" lengthAdjust="spacingAndGlyphs">Esta presente Ordem de Serviço objetivam</text><text x="52.8" y="135.70" font-family="Liberation Sans" font-size="3.1"  fill="#3a3a3a" textLength="58.4" lengthAdjust="spacingAndGlyphs">Esta presente Ordem de Serviço objeti</text><text x="52.8" y="139.00" font-family="Liberation Sans" font-size="3.1"  fill="#3a3a3a" textLength="163.6" lengthAdjust="spacingAndGlyphs">Esta presente Ordem de Serviço objetivamos informar conforme estabelecido o disposto na NR-1 sobre as con</text><text x="52.8" y="142.30" font-family="Liberation Sans" font-size="3.1"  fill="#3a3a3a" textLength="180.8" lengthAdjust="spacingAndGlyphs">Esta presente Ordem de Serviço objetivamos informar conforme estabelecido o disposto na NR-1 sobre as condições de s</text></svg><svg width="250" height="143" style="position:absolute;left:0;top:0"><rect x="221" y="111" width="23.3" height="24.3" rx="2" fill="#fcefe5"/><path d="M227 115 H233 L239.5 121.5 V130 Q239.5 131.8 237.7 131.8 H227.7 Q225.9 131.8 225.9 130 V116.8 Q225.9 115 227.7 115 Z" fill="#c8611f"/><path d="M233.4 116.5 V120.9 H237.8 Z" fill="#fcefe5"/><path d="M227.5 130.2 L231.8 125.4 L233.5 127.2 L237.8 122.5 V130.2 Z" fill="#fcefe5"/><circle cx="229.8" cy="121.8" r="1.3" fill="#fcefe5"/><path d="M188.2 121.8 H207.6 V113.75 L227 123.5 L207.6 133.25 V125.2 H188.2 Z" fill="#0a4ae0"/></svg></div>
<div class="chkbg" style="left:562.2px;top:386.8px"></div><div class="chk" style="left:571.5px;top:396.0px"></div>
<div class="txt" style="left:561.5px;top:541.71px;font-size:13.1px;color:#3d3f45;">Nome documento</div>
<svg class="abs" style="left:718.0px;top:536.0px" width="20" height="20" viewBox="0 0 20 20"><path d="M9.2 9.5 Q5.6 9.6 5.3 11 Q5.2 12.4 9.6 14.2 Q11.6 15.3 10.8 16.5 Q10 17.5 6.9 17.3" fill="none" stroke="#a01e22" stroke-width="1.55" stroke-linecap="round"/><path d="M11.6 12.2 L17.2 6.6" stroke="#a01e22" stroke-width="2.3" stroke-linecap="round"/></svg><svg class="abs" style="left:755.5px;top:540.3px" width="16" height="14" viewBox="0 0 16 14"><path d="M5.4 4 V1.4 H9.8 V4" fill="none" stroke="#cfd2d8" stroke-width="1.4"/><rect x="0.7" y="3.5" width="13.7" height="10.1" rx="1.5" fill="#cfd2d8"/><path d="M4.6 8.6 L6.8 10.7 L10.8 6.7" fill="none" stroke="#fff" stroke-width="1.3"/></svg><div class="abs" style="left:794.7px;top:541.8px;width:3px;height:12px"><i class="dot" style="top:0"></i><i class="dot" style="top:4.3px"></i><i class="dot" style="top:8.6px"></i></div>
<div class="card" style="left:838px;top:377px;height:193px"></div>
<svg class="abs" style="left:838px;top:377.5px" width="259" height="130" viewBox="0 0 259 130"><path d="M110 43.5 H138 L155 60.0 V100.1 Q155 105.1 150 105.1 H110 Q105 105.1 105 100.1 V48.5 Q105 43.5 110 43.5 Z" fill="#45976e"/><path d="M133.5 48.2 V65.0 H150.3 Z" fill="#fff"/><rect x="114.3" y="71.5" width="9.8" height="6" fill="#fff"/><rect x="127.2" y="71.5" width="9.8" height="6" fill="#fff"/><rect x="114.3" y="80.8" width="9.8" height="6" fill="#fff"/><rect x="127.2" y="80.8" width="9.8" height="6" fill="#fff"/><rect x="114.3" y="90.1" width="9.8" height="6" fill="#fff"/><rect x="127.2" y="90.1" width="9.8" height="6" fill="#fff"/><path d="M55.6 76.4 H87.8 V68.65 L108 78.4 L87.8 88.15 V80.4 H55.6 Z" fill="#0a4ae0"/></svg>
<div class="chkbg" style="left:846.1px;top:386.9px"></div><div class="chk" style="left:855.4px;top:396.09999999999997px"></div>
<div class="txt" style="left:846px;top:541.71px;font-size:13.1px;color:#3d3f45;">Nome documento</div>
<svg class="abs" style="left:1002.5px;top:536.0px" width="20" height="20" viewBox="0 0 20 20"><path d="M9.2 9.5 Q5.6 9.6 5.3 11 Q5.2 12.4 9.6 14.2 Q11.6 15.3 10.8 16.5 Q10 17.5 6.9 17.3" fill="none" stroke="#a01e22" stroke-width="1.55" stroke-linecap="round"/><path d="M11.6 12.2 L17.2 6.6" stroke="#a01e22" stroke-width="2.3" stroke-linecap="round"/></svg><svg class="abs" style="left:1040px;top:540.3px" width="16" height="14" viewBox="0 0 16 14"><path d="M5.4 4 V1.4 H9.8 V4" fill="none" stroke="#cfd2d8" stroke-width="1.4"/><rect x="0.7" y="3.5" width="13.7" height="10.1" rx="1.5" fill="#cfd2d8"/><path d="M4.6 8.6 L6.8 10.7 L10.8 6.7" fill="none" stroke="#fff" stroke-width="1.3"/></svg><div class="abs" style="left:1079.2px;top:541.8px;width:3px;height:12px"><i class="dot" style="top:0"></i><i class="dot" style="top:4.3px"></i><i class="dot" style="top:8.6px"></i></div>
<div class="card" style="left:1122px;top:377px;height:193px"></div>
<div class="abs" style="left:1128px;top:381.2px;width:250px;height:143px;overflow:hidden"><svg width="250" height="143" viewBox="0 0 250 143" style="position:absolute;left:0;top:0"><rect x="0.5" y="0.4" width="245.2" height="9" fill="none" stroke="#555" stroke-width="0.8"/><text x="18.5" y="7.2" font-family="Liberation Sans" font-size="5.2" font-weight="700" font-style="italic" fill="#3b4890" textLength="18" lengthAdjust="spacingAndGlyphs">BETHA</text><path d="M12.5 6.5 Q12.5 3 15 3 Q17 3.2 16.3 5.5 L16 6.8 Z" fill="none" stroke="#6b74a8" stroke-width="0.6"/><text x="130" y="6.30" font-family="Liberation Sans" font-size="3.4" font-weight='700' fill="#222" textLength="37" lengthAdjust="spacingAndGlyphs">Esta presente Ordem de </text><path d="M0.5 14.2 H245.7" stroke="#555" stroke-width="0.8"/><path d="M0.5 19 H245.7" stroke="#555" stroke-width="0.7"/><path d="M0.5 23.8 H245.7" stroke="#555" stroke-width="0.7"/><path d="M0.5 28.6 H245.7" stroke="#555" stroke-width="0.7"/><path d="M0.5 33.7 H245.7" stroke="#555" stroke-width="0.7"/><path d="M0.5 38.5 H245.7" stroke="#555" stroke-width="0.7"/><path d="M0.5 43.5 H245.7" stroke="#555" stroke-width="0.8"/><path d="M0.5 14.2 V43.5" stroke="#555" stroke-width="0.7"/><path d="M245.7 14.2 V43.5" stroke="#555" stroke-width="0.7"/><path d="M51.5 14.2 V43.5" stroke="#333" stroke-width="0.9"/><text x="53" y="17.70" font-family="Liberation Sans" font-size="3.2" font-weight='700' fill="#222" textLength="37" lengthAdjust="spacingAndGlyphs">Esta presente Ordem de </text><rect x="1" y="15.2" width="2" height="2.6" fill="#aaa"/><text x="53" y="22.50" font-family="Liberation Sans" font-size="3.2" font-weight='700' fill="#222" textLength="24" lengthAdjust="spacingAndGlyphs">Esta presente O</text><rect x="1" y="20" width="2" height="2.6" fill="#aaa"/><text x="53" y="27.30" font-family="Liberation Sans" font-size="3.2" font-weight='700' fill="#222" textLength="12" lengthAdjust="spacingAndGlyphs">Esta pr</text><rect x="1" y="24.8" width="2" height="2.6" fill="#aaa"/><text x="53" y="32.25" font-family="Liberation Sans" font-size="3.2" font-weight='700' fill="#222" textLength="26" lengthAdjust="spacingAndGlyphs">Esta presente Or</text><rect x="1" y="29.6" width="2" height="2.6" fill="#aaa"/><text x="53" y="37.20" font-family="Liberation Sans" font-size="3.2" font-weight='700' fill="#222" textLength="25" lengthAdjust="spacingAndGlyphs">Esta presente Or</text><rect x="1" y="34.7" width="2" height="2.6" fill="#aaa"/><text x="53" y="42.10" font-family="Liberation Sans" font-size="3.2" font-weight='700' fill="#222" textLength="10" lengthAdjust="spacingAndGlyphs">Esta p</text><text x="2" y="42.10" font-family="Liberation Sans" font-size="3.0"  fill="#666" textLength="46" lengthAdjust="spacingAndGlyphs">Esta presente Ordem de Serviç</text><rect x="51.8" y="17.8" width="193.6" height="0.9" fill="#bbb"/><rect x="51.8" y="22.6" width="193.6" height="0.9" fill="#bbb"/><rect x="51.8" y="27.400000000000002" width="193.6" height="0.9" fill="#bbb"/><rect x="51.5" y="48.2" width="194.2" height="8.899999999999999" fill="#d3e2f4"/><path d="M0.5 48.2 H245.7" stroke="#555" stroke-width="0.8"/><path d="M0.5 57.1 H245.7" stroke="#555" stroke-width="0.8"/><path d="M0.5 72.2 H245.7" stroke="#555" stroke-width="0.8"/><path d="M0.5 80.5 H245.7" stroke="#555" stroke-width="0.8"/><path d="M0.5 99.4 H245.7" stroke="#555" stroke-width="0.8"/><path d="M0.5 104.1 H245.7" stroke="#555" stroke-width="0.8"/><path d="M0.5 112.3 H245.7" stroke="#555" stroke-width="0.8"/><path d="M0.5 48.2 V146" stroke="#555" stroke-width="0.8"/><path d="M245.7 48.2 V146" stroke="#555" stroke-width="0.8"/><path d="M51.5 48.2 V146" stroke="#333" stroke-width="0.9"/><text x="126" y="53.80" font-family="Liberation Sans" font-size="3.2" font-weight='700' fill="#222" textLength="45" lengthAdjust="spacingAndGlyphs">Esta presente Ordem de Serviç</text><text x="2" y="53.90" font-family="Liberation Sans" font-size="3.1" font-weight='700' fill="#222" textLength="22" lengthAdjust="spacingAndGlyphs">Esta presente </text><text x="2" y="66.10" font-family="Liberation Sans" font-size="3.1" font-weight='700' fill="#222" textLength="19" lengthAdjust="spacingAndGlyphs">Esta present</text><text x="2" y="77.70" font-family="Liberation Sans" font-size="3.1" font-weight='700' fill="#222" textLength="29" lengthAdjust="spacingAndGlyphs">Esta presente Orde</text><text x="2" y="91.10" font-family="Liberation Sans" font-size="3.1" font-weight='700' fill="#222" textLength="46" lengthAdjust="spacingAndGlyphs">Esta presente Ordem de Serviç</text><text x="2" y="102.80" font-family="Liberation Sans" font-size="3.1" font-weight='700' fill="#222" textLength="28.5" lengthAdjust="spacingAndGlyphs">Esta presente Orde</text><text x="2" y="107.90" font-family="Liberation Sans" font-size="3.1" font-weight='700' fill="#222" textLength="40" lengthAdjust="spacingAndGlyphs">Esta presente Ordem de Se</text><text x="2" y="110.80" font-family="Liberation Sans" font-size="3.1" font-weight='700' fill="#222" textLength="21" lengthAdjust="spacingAndGlyphs">Esta presente</text><text x="2" y="129.10" font-family="Liberation Sans" font-size="3.1" font-weight='700' fill="#222" textLength="36.8" lengthAdjust="spacingAndGlyphs">Esta presente Ordem de </text><text x="2" y="132.80" font-family="Liberation Sans" font-size="3.1" font-weight='700' fill="#222" textLength="14" lengthAdjust="spacingAndGlyphs">Esta pres</text><text x="52.8" y="61.10" font-family="Liberation Sans" font-size="3.1"  fill="#3a3a3a" textLength="186.5" lengthAdjust="spacingAndGlyphs">Esta presente Ordem de Serviço objetivamos informar conforme estabelecido o disposto na NR-1 sobre as condições de segur</text><text x="52.8" y="64.40" font-family="Liberation Sans" font-size="3.1"  fill="#3a3a3a" textLength="186.5" lengthAdjust="spacingAndGlyphs">Esta presente Ordem de Serviço objetivamos informar conforme estabelecido o disposto na NR-1 sobre as condições de segur</text><text x="52.8" y="67.70" font-family="Liberation Sans" font-size="3.1"  fill="#3a3a3a" textLength="181.7" lengthAdjust="spacingAndGlyphs">Esta presente Ordem de Serviço objetivamos informar conforme estabelecido o disposto na NR-1 sobre as condições de se</text><text x="52.8" y="71.60" font-family="Liberation Sans" font-size="3.1"  fill="#3a3a3a" textLength="173.2" lengthAdjust="spacingAndGlyphs">Esta presente Ordem de Serviço objetivamos informar conforme estabelecido o disposto na NR-1 sobre as condições</text><text x="52.8" y="76.40" font-family="Liberation Sans" font-size="3.1"  fill="#3a3a3a" textLength="180.8" lengthAdjust="spacingAndGlyphs">Esta presente Ordem de Serviço objetivamos informar conforme estabelecido o disposto na NR-1 sobre as condições de s</text><text x="52.8" y="79.90" font-family="Liberation Sans" font-size="3.1"  fill="#3a3a3a" textLength="185" lengthAdjust="spacingAndGlyphs">Esta presente Ordem de Serviço objetivamos informar conforme estabelecido o disposto na NR-1 sobre as condições de segu</text><text x="52.8" y="84.20" font-family="Liberation Sans" font-size="3.1"  fill="#3a3a3a" textLength="108" lengthAdjust="spacingAndGlyphs">Esta presente Ordem de Serviço objetivamos informar conforme estabele</text><text x="52.8" y="87.80" font-family="Liberation Sans" font-size="3.1"  fill="#3a3a3a" textLength="126" lengthAdjust="spacingAndGlyphs">Esta presente Ordem de Serviço objetivamos informar conforme estabelecido o dispo</text><text x="52.8" y="91.10" font-family="Liberation Sans" font-size="3.1"  fill="#3a3a3a" textLength="181.7" lengthAdjust="spacingAndGlyphs">Esta presente Ordem de Serviço objetivamos informar conforme estabelecido o disposto na NR-1 sobre as condições de se</text><text x="52.8" y="94.70" font-family="Liberation Sans" font-size="3.1"  fill="#3a3a3a" textLength="23" lengthAdjust="spacingAndGlyphs">Esta presente </text><text x="52.8" y="98.00" font-family="Liberation Sans" font-size="3.1"  fill="#3a3a3a" textLength="108" lengthAdjust="spacingAndGlyphs">Esta presente Ordem de Serviço objetivamos informar conforme estabele</text><text x="52.8" y="102.90" font-family="Liberation Sans" font-size="3.1"  fill="#3a3a3a" textLength="84.2" lengthAdjust="spacingAndGlyphs">Esta presente Ordem de Serviço objetivamos informar co</text><text x="52.8" y="110.80" font-family="Liberation Sans" font-size="3.1"  fill="#3a3a3a" textLength="19.1" lengthAdjust="spacingAndGlyphs">Esta present</text><text x="52.8" y="115.40" font-family="Liberation Sans" font-size="3.1"  fill="#3a3a3a" textLength="68.9" lengthAdjust="spacingAndGlyphs">Esta presente Ordem de Serviço objetivamos i</text><text x="52.8" y="118.90" font-family="Liberation Sans" font-size="3.1"  fill="#3a3a3a" textLength="128.8" lengthAdjust="spacingAndGlyphs">Esta presente Ordem de Serviço objetivamos informar conforme estabelecido o dispost</text><text x="52.8" y="121.90" font-family="Liberation Sans" font-size="3.1"  fill="#3a3a3a" textLength="116.7" lengthAdjust="spacingAndGlyphs">Esta presente Ordem de Serviço objetivamos informar conforme estabelecido o</text><text x="52.8" y="125.50" font-family="Liberation Sans" font-size="3.1"  fill="#3a3a3a" textLength="70.8" lengthAdjust="spacingAndGlyphs">Esta presente Ordem de Serviço objetivamos in</text><text x="52.8" y="128.90" font-family="Liberation Sans" font-size="3.1"  fill="#3a3a3a" textLength="118.6" lengthAdjust="spacingAndGlyphs">Esta presente Ordem de Serviço objetivamos informar conforme estabelecido o </text><text x="52.8" y="132.20" font-family="Liberation Sans" font-size="3.1"  fill="#3a3a3a" textLength="63.1" lengthAdjust="spacingAndGlyphs">Esta presente Ordem de Serviço objetivam</text><text x="52.8" y="135.70" font-family="Liberation Sans" font-size="3.1"  fill="#3a3a3a" textLength="58.4" lengthAdjust="spacingAndGlyphs">Esta presente Ordem de Serviço objeti</text><text x="52.8" y="139.00" font-family="Liberation Sans" font-size="3.1"  fill="#3a3a3a" textLength="163.6" lengthAdjust="spacingAndGlyphs">Esta presente Ordem de Serviço objetivamos informar conforme estabelecido o disposto na NR-1 sobre as con</text><text x="52.8" y="142.30" font-family="Liberation Sans" font-size="3.1"  fill="#3a3a3a" textLength="180.8" lengthAdjust="spacingAndGlyphs">Esta presente Ordem de Serviço objetivamos informar conforme estabelecido o disposto na NR-1 sobre as condições de s</text></svg><svg width="250" height="143" style="position:absolute;left:0;top:0"><rect x="220.5" y="111.5" width="23.3" height="23.6" rx="2" fill="#f8e0e0"/><rect x="224.2" y="116" width="15.7" height="15" rx="2.5" fill="#c9302c"/><text x="232.1" y="126.4" font-family="Liberation Sans" font-weight="700" font-size="6.6" fill="#fff" text-anchor="middle">PDF</text><path d="M194.2 121.89999999999999 H207.8 V114.1 L225 123.6 L207.8 133.1 V125.3 H194.2 Z" fill="#0a4ae0"/></svg></div>
<div class="chkbg" style="left:1130.8px;top:386.8px"></div><div class="chk" style="left:1140.1px;top:396.0px"></div>
<div class="txt" style="left:1130.5px;top:541.71px;font-size:13.1px;color:#3d3f45;">Nome documento</div>
<svg class="abs" style="left:1287.0px;top:536.0px" width="20" height="20" viewBox="0 0 20 20"><path d="M9.2 9.5 Q5.6 9.6 5.3 11 Q5.2 12.4 9.6 14.2 Q11.6 15.3 10.8 16.5 Q10 17.5 6.9 17.3" fill="none" stroke="#a01e22" stroke-width="1.55" stroke-linecap="round"/><path d="M11.6 12.2 L17.2 6.6" stroke="#a01e22" stroke-width="2.3" stroke-linecap="round"/></svg><svg class="abs" style="left:1324.5px;top:540.3px" width="16" height="14" viewBox="0 0 16 14"><path d="M5.4 4 V1.4 H9.8 V4" fill="none" stroke="#cfd2d8" stroke-width="1.4"/><rect x="0.7" y="3.5" width="13.7" height="10.1" rx="1.5" fill="#cfd2d8"/><path d="M4.6 8.6 L6.8 10.7 L10.8 6.7" fill="none" stroke="#fff" stroke-width="1.3"/></svg><div class="abs" style="left:1363.7px;top:541.8px;width:3px;height:12px"><i class="dot" style="top:0"></i><i class="dot" style="top:4.3px"></i><i class="dot" style="top:8.6px"></i></div>
<div class="card" style="left:269px;top:595.3px;height:193px"></div>
<svg class="abs" style="left:269px;top:595.3px" width="259" height="130" viewBox="0 0 259 130"><path d="M110 42.5 H138 L155 59.0 V99.1 Q155 104.1 150 104.1 H110 Q105 104.1 105 99.1 V47.5 Q105 42.5 110 42.5 Z" fill="#45976e"/><path d="M133.5 47.2 V64.0 H150.3 Z" fill="#fff"/><rect x="114.3" y="70.5" width="9.8" height="6" fill="#fff"/><rect x="127.2" y="70.5" width="9.8" height="6" fill="#fff"/><rect x="114.3" y="79.8" width="9.8" height="6" fill="#fff"/><rect x="127.2" y="79.8" width="9.8" height="6" fill="#fff"/><rect x="114.3" y="89.1" width="9.8" height="6" fill="#fff"/><rect x="127.2" y="89.1" width="9.8" height="6" fill="#fff"/><path d="M74.3 73.69999999999999 H98.4 V65.64999999999999 L117.4 75.6 L98.4 85.55 V77.5 H74.3 Z" fill="#0a4ae0"/></svg>
<div class="chkbg" style="left:277.3px;top:604.0px"></div><div class="chk" style="left:286.6px;top:613.2px"></div>
<div class="txt" style="left:277.5px;top:758.61px;font-size:13.1px;color:#3d3f45;">Nome documento</div>
<svg class="abs" style="left:434.0px;top:752.9px" width="20" height="20" viewBox="0 0 20 20"><path d="M9.2 9.5 Q5.6 9.6 5.3 11 Q5.2 12.4 9.6 14.2 Q11.6 15.3 10.8 16.5 Q10 17.5 6.9 17.3" fill="none" stroke="#a01e22" stroke-width="1.55" stroke-linecap="round"/><path d="M11.6 12.2 L17.2 6.6" stroke="#a01e22" stroke-width="2.3" stroke-linecap="round"/></svg><svg class="abs" style="left:471.5px;top:757.1999999999999px" width="16" height="14" viewBox="0 0 16 14"><path d="M5.4 4 V1.4 H9.8 V4" fill="none" stroke="#cfd2d8" stroke-width="1.4"/><rect x="0.7" y="3.5" width="13.7" height="10.1" rx="1.5" fill="#cfd2d8"/><path d="M4.6 8.6 L6.8 10.7 L10.8 6.7" fill="none" stroke="#fff" stroke-width="1.3"/></svg><div class="abs" style="left:510.7px;top:758.6999999999999px;width:3px;height:12px"><i class="dot" style="top:0"></i><i class="dot" style="top:4.3px"></i><i class="dot" style="top:8.6px"></i></div>


<!-- FAB -->
<div class="abs" style="left:1331.5px;top:711px;width:52px;height:52px;border-radius:50%;background:#4373d6"></div>
<div class="abs" style="left:1351px;top:736.1px;width:14px;height:1.8px;background:#fff"></div>
<div class="abs" style="left:1357.2px;top:730px;width:1.8px;height:14px;background:#fff"></div>
</body></html>
